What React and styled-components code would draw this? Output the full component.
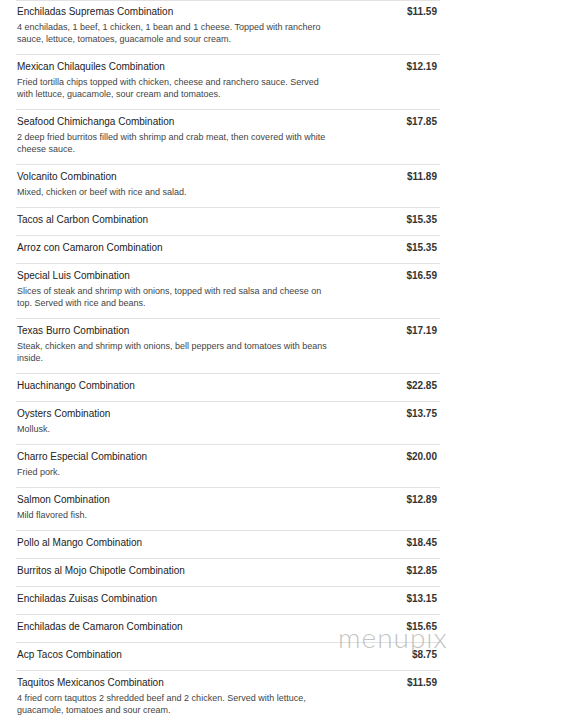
import styled, { createGlobalStyle } from "styled-components";

const GlobalStyle = createGlobalStyle`
  body {
    margin: 0;
    background: #fff;
    font-family: "Liberation Sans", Arial, sans-serif;
  }
`;

const MenuPage = styled.div`
  position: relative;
  width: 424px;
  margin-left: 16px;
`;

const MenuRow = styled.div`
  display: flex;
  justify-content: space-between;
  align-items: flex-start;
  border-top: 1px solid #e2e2e2;
  padding: 6px 3px 9px 1px;
  &:first-child {
    padding-top: 5px;
  }
`;

const ItemInfo = styled.div`
  width: 345px;
`;

const ItemName = styled.div`
  font-size: 10px;
  line-height: 12px;
  color: #222;
`;

const ItemDesc = styled.div`
  margin-top: 3px;
  font-size: 9px;
  line-height: 12px;
  color: #444;
  white-space: pre-line;
`;

const ItemPrice = styled.div`
  font-size: 10px;
  line-height: 12px;
  font-weight: bold;
  color: #333;
`;

const Watermark = styled.div`
  position: absolute;
  left: 322px;
  top: 620px;
  font-family: Lato, "Noto Sans", sans-serif;
  font-weight: 300;
  font-size: 28px;
  letter-spacing: 1px;
  color: rgba(175, 175, 175, 0.75);
  pointer-events: none;
`;

const items = [
  {
    name: "Enchiladas Supremas Combination",
    desc: "4 enchiladas, 1 beef, 1 chicken, 1 bean and 1 cheese. Topped with ranchero\nsauce, lettuce, tomatoes, guacamole and sour cream.",
    price: "$11.59",
  },
  {
    name: "Mexican Chilaquiles Combination",
    desc: "Fried tortilla chips topped with chicken, cheese and ranchero sauce. Served\nwith lettuce, guacamole, sour cream and tomatoes.",
    price: "$12.19",
  },
  {
    name: "Seafood Chimichanga Combination",
    desc: "2 deep fried burritos filled with shrimp and crab meat, then covered with white\ncheese sauce.",
    price: "$17.85",
  },
  {
    name: "Volcanito Combination",
    desc: "Mixed, chicken or beef with rice and salad.",
    price: "$11.89",
  },
  { name: "Tacos al Carbon Combination", price: "$15.35" },
  { name: "Arroz con Camaron Combination", price: "$15.35" },
  {
    name: "Special Luis Combination",
    desc: "Slices of steak and shrimp with onions, topped with red salsa and cheese on\ntop. Served with rice and beans.",
    price: "$16.59",
  },
  {
    name: "Texas Burro Combination",
    desc: "Steak, chicken and shrimp with onions, bell peppers and tomatoes with beans\ninside.",
    price: "$17.19",
  },
  { name: "Huachinango Combination", price: "$22.85" },
  { name: "Oysters Combination", desc: "Mollusk.", price: "$13.75" },
  { name: "Charro Especial Combination", desc: "Fried pork.", price: "$20.00" },
  { name: "Salmon Combination", desc: "Mild flavored fish.", price: "$12.89" },
  { name: "Pollo al Mango Combination", price: "$18.45" },
  { name: "Burritos al Mojo Chipotle Combination", price: "$12.85" },
  { name: "Enchiladas Zuisas Combination", price: "$13.15" },
  { name: "Enchiladas de Camaron Combination", price: "$15.65" },
  { name: "Acp Tacos Combination", price: "$8.75" },
  {
    name: "Taquitos Mexicanos Combination",
    desc: "4 fried corn taquttos 2 shredded beef and 2 chicken. Served with lettuce,\nguacamole, tomatoes and sour cream.",
    price: "$11.59",
  },
];

const App = () => {
  return (
    <>
      <GlobalStyle />
      <MenuPage>
        {items.map((item) => (
          <MenuRow key={item.name}>
            <ItemInfo>
              <ItemName>{item.name}</ItemName>
              {item.desc && <ItemDesc>{item.desc}</ItemDesc>}
            </ItemInfo>
            <ItemPrice>{item.price}</ItemPrice>
          </MenuRow>
        ))}
        <Watermark>menupix</Watermark>
      </MenuPage>
    </>
  );
};

export default App;
